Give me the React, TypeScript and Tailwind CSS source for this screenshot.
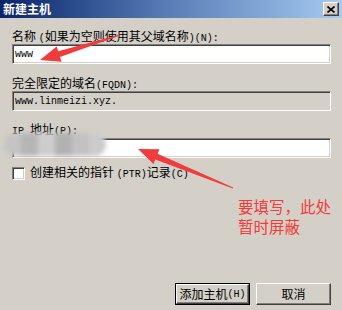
import React from "react";

const L = ({ children }: { children: React.ReactNode }) => (
  <span className="font-['Liberation_Mono',monospace] text-[10px]">{children}</span>
);

// tapered annotation arrow: thin tail, wide head
const arrowPoints = (tx: number, ty: number, hx: number, hy: number) => {
  const dx = hx - tx;
  const dy = hy - ty;
  const len = Math.hypot(dx, dy);
  const ux = dx / len;
  const uy = dy / len;
  const nx = -uy;
  const ny = ux;
  const bx = hx - ux * 20;
  const by = hy - uy * 20;
  const p = (x: number, y: number) => `${x.toFixed(1)},${y.toFixed(1)}`;
  return [
    p(tx + nx * 0.6, ty + ny * 0.6),
    p(bx + nx * 3, by + ny * 3),
    p(bx + nx * 8, by + ny * 8),
    p(hx, hy),
    p(bx - nx * 8, by - ny * 8),
    p(bx - nx * 3, by - ny * 3),
    p(tx - nx * 0.6, ty - ny * 0.6),
  ].join(" ");
};

const sunken =
  "border border-t-[#808080] border-l-[#808080] border-b-white border-r-white shadow-[inset_1px_1px_0_#404040,inset_-1px_-1px_0_#d4d0c8]";

export default function App() {
  return (
    <div className="relative w-[342px] h-[310px] bg-[#d4d0c8] overflow-hidden flex flex-col font-['Noto_Sans_CJK_SC',sans-serif] text-[12px] text-black">
      <div className="h-[18px] flex items-center justify-between pl-[3px] pr-[3px] bg-gradient-to-r from-[#0a246a] via-[#5a7fb8] to-[#a6caf0]">
        <span className="text-white font-bold text-[12px] leading-[14px]">新建主机</span>
        <div className="w-[16px] h-[14px] bg-[#d4d0c8] border border-t-white border-l-white border-b-[#404040] border-r-[#404040] shadow-[inset_-1px_-1px_0_#808080] flex items-center justify-center">
          <svg width="8" height="7" viewBox="0 0 8 7">
            <path d="M0.5 0.5 L7.5 6.5 M7.5 0.5 L0.5 6.5" stroke="#000" strokeWidth="1.6" />
          </svg>
        </div>
      </div>

      <div className="flex flex-col px-[12px] pt-[11px]">
        <div className="h-[14px] leading-[14px]">
          名称 <L>(</L>如果为空则使用其父域名称<L>)(N):</L>
        </div>
        <div className={`mt-[1px] h-[20px] w-[319px] bg-white ${sunken} flex items-center pl-[2px]`}>
          <L>www</L>
        </div>

        <div className="mt-[12px] h-[14px] leading-[14px]">
          完全限定的域名<L>(FQDN):</L>
        </div>
        <div className={`mt-[1px] h-[20px] w-[319px] bg-[#d4d0c8] ${sunken} flex items-center pl-[2px]`}>
          <L>www.linmeizi.xyz.</L>
        </div>

        <div className="mt-[11px] h-[14px] leading-[14px]">
          <L>IP </L>地址<L>(P):</L>
        </div>
        <div className={`mt-[2px] h-[20px] w-[319px] bg-white ${sunken}`} />

        <div className="mt-[8px] h-[14px] flex items-center gap-[5px]">
          <div className={`w-[13px] h-[13px] bg-white ${sunken}`} />
          <span className="leading-[14px]">
            创建相关的指针 <L>(PTR)</L>记录<L>(C)</L>
          </span>
        </div>

        <div className="mt-[16px] ml-[226px] whitespace-nowrap text-[15.5px] leading-[20px] text-[#f53a3a]">
          <div>要填写，此处</div>
          <div>暂时屏蔽</div>
        </div>
      </div>

      <div className="mt-auto flex justify-end gap-[6px] pr-[11px] pb-[5px]">
        <div className="w-[75px] h-[22px] border border-black">
          <div className="h-full bg-[#d4d0c8] border border-t-white border-l-white border-b-[#404040] border-r-[#404040] shadow-[inset_-1px_-1px_0_#808080] flex items-center justify-center">
            添加主机<L>(H)</L>
          </div>
        </div>
        <div className="w-[75px] h-[22px] bg-[#d4d0c8] border border-t-white border-l-white border-b-[#404040] border-r-[#404040] shadow-[inset_-1px_-1px_0_#808080] flex items-center justify-center">
          取消
        </div>
      </div>

      {/* blurred redaction over the IP field */}
      <div className="absolute left-[4px] top-[133px] w-[102px] h-[23px] flex rounded-full overflow-hidden blur-[2px]">
        <div className="flex-1 bg-[#c4c4c4]" />
        <div className="flex-1 bg-[#b6b6b6]" />
        <div className="flex-1 bg-[#cdcdcd]" />
        <div className="flex-1 bg-[#b2b2b2]" />
        <div className="flex-1 bg-[#c2c2c2]" />
        <div className="flex-1 bg-[#cbcbcb]" />
      </div>

      <svg className="absolute inset-0 pointer-events-none" width="342" height="310">
        <polygon points={arrowPoints(120, 35, 40, 60)} fill="#f03c3c" />
        <polygon points={arrowPoints(233, 188, 138, 149)} fill="#f03c3c" />
      </svg>
    </div>
  );
}
